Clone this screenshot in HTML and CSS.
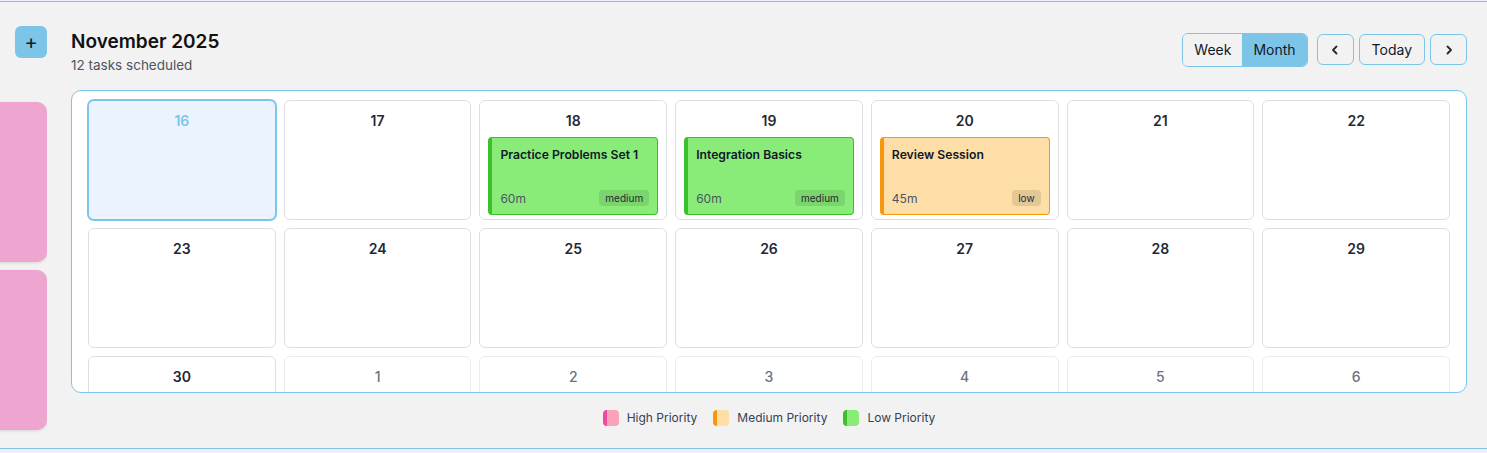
FILE: index.html
```html
<!DOCTYPE html>
<html lang="en">
<head>
<meta charset="utf-8">
<title>Calendar</title>
<link rel="stylesheet" href="styles.css">
</head>
<body>
<div class="app">
  <aside class="sidebar">
    <button class="add-btn" type="button">+</button>
    <div class="side-card"></div>
    <div class="side-card"></div>
  </aside>
  <main class="main">
    <header class="header">
      <div class="title-block">
        <h1 class="title">November 2025</h1>
        <p class="subtitle">12 tasks scheduled</p>
      </div>
      <div class="controls">
        <div class="toggle">
          <button class="toggle-btn" type="button">Week</button>
          <button class="toggle-btn active" type="button">Month</button>
        </div>
        <div class="nav">
          <button class="nav-btn icon" type="button" aria-label="Previous">
            <svg width="14" height="14" viewBox="0 0 14 14"><polyline points="8.5,3.5 5,7 8.5,10.5" fill="none" stroke="#1f2937" stroke-width="1.8" stroke-linecap="round" stroke-linejoin="round"/></svg>
          </button>
          <button class="nav-btn" type="button">Today</button>
          <button class="nav-btn icon" type="button" aria-label="Next">
            <svg width="14" height="14" viewBox="0 0 14 14"><polyline points="5.5,3.5 9,7 5.5,10.5" fill="none" stroke="#1f2937" stroke-width="1.8" stroke-linecap="round" stroke-linejoin="round"/></svg>
          </button>
        </div>
      </div>
    </header>

    <section class="calendar">
      <div class="grid">
        <div class="cell today"><div class="day">16</div></div>
        <div class="cell"><div class="day">17</div></div>
        <div class="cell"><div class="day">18</div>
          <div class="task medium-prio">
            <div class="task-title">Practice Problems Set 1</div>
            <div class="task-foot"><span class="dur">60m</span><span class="badge">medium</span></div>
          </div>
        </div>
        <div class="cell"><div class="day">19</div>
          <div class="task medium-prio">
            <div class="task-title">Integration Basics</div>
            <div class="task-foot"><span class="dur">60m</span><span class="badge">medium</span></div>
          </div>
        </div>
        <div class="cell"><div class="day">20</div>
          <div class="task low-prio">
            <div class="task-title">Review Session</div>
            <div class="task-foot"><span class="dur">45m</span><span class="badge">low</span></div>
          </div>
        </div>
        <div class="cell"><div class="day">21</div></div>
        <div class="cell"><div class="day">22</div></div>

        <div class="cell"><div class="day">23</div></div>
        <div class="cell"><div class="day">24</div></div>
        <div class="cell"><div class="day">25</div></div>
        <div class="cell"><div class="day">26</div></div>
        <div class="cell"><div class="day">27</div></div>
        <div class="cell"><div class="day">28</div></div>
        <div class="cell"><div class="day">29</div></div>

        <div class="cell"><div class="day">30</div></div>
        <div class="cell other"><div class="day">1</div></div>
        <div class="cell other"><div class="day">2</div></div>
        <div class="cell other"><div class="day">3</div></div>
        <div class="cell other"><div class="day">4</div></div>
        <div class="cell other"><div class="day">5</div></div>
        <div class="cell other"><div class="day">6</div></div>
      </div>
    </section>

    <div class="legend">
      <div class="legend-item"><span class="swatch sw-high"></span>High Priority</div>
      <div class="legend-item"><span class="swatch sw-medium"></span>Medium Priority</div>
      <div class="legend-item"><span class="swatch sw-low"></span>Low Priority</div>
    </div>
  </main>
</div>
</body>
</html>
```

FILE: styles.css
```css
* { box-sizing: border-box; }

html, body {
  margin: 0;
  padding: 0;
}

body {
  background: #eef0fb;
  padding-top: 1px;
  font-family: Inter, "Noto Sans", "Liberation Sans", sans-serif;
  color: #111827;
  height: 453px;
  overflow: hidden;
}

.app {
  display: flex;
  height: 448px;
  background: #f2f2f2;
  border-top: 1px solid #7fc0e3;
  border-bottom: 1px solid #7fc0e3;
}

.sidebar {
  width: 47px;
  flex: none;
  padding-top: 24px;
  overflow: hidden;
  display: flex;
  flex-direction: column;
  align-items: flex-start;
}

.add-btn {
  width: 32px;
  height: 32px;
  margin-left: 15px;
  border: none;
  border-radius: 6px;
  background: #7cc5e9;
  color: #111827;
  font-family: inherit;
  font-size: 20px;
  font-weight: 400;
  line-height: 32px;
  padding: 0;
  margin-bottom: 44px;
}

.side-card {
  width: 60px;
  height: 160px;
  margin-left: -13px;
  flex: none;
  border-radius: 10px;
  background: #eea5cf;
  box-shadow: 0 1px 3px rgba(0, 0, 0, 0.12);
  margin-bottom: 8px;
}

.main {
  width: 1396px;
  margin-left: 24px;
  padding-top: 25px;
}

.header {
  height: 48px;
  display: flex;
  align-items: center;
  justify-content: space-between;
  margin-bottom: 15px;
}

.title {
  margin: 0;
  padding-top: 1px;
  font-size: 19px;
  line-height: 28px;
  font-weight: 600;
  color: #111111;
}

.subtitle {
  margin: 0;
  font-size: 13.5px;
  line-height: 19px;
  color: #4b5563;
}

.controls {
  display: flex;
  align-items: center;
  padding-bottom: 3px;
}

.toggle {
  display: flex;
  height: 34px;
  border: 1px solid #7cc5e9;
  border-radius: 6px;
  overflow: hidden;
  margin-right: 9px;
}

.toggle-btn {
  border: none;
  background: #f2f2f2;
  font-family: inherit;
  font-size: 14px;
  color: #111827;
  padding: 0 11px;
  height: 100%;
}

.toggle-btn.active {
  background: #7cc5e9;
  padding: 0 11px;
}

.nav {
  display: flex;
  gap: 5px;
}

.nav-btn {
  height: 31px;
  border: 1px solid #7cc5e9;
  border-radius: 6px;
  background: #f2f2f2;
  font-family: inherit;
  font-size: 14px;
  color: #111827;
  padding: 0 12px;
  display: flex;
  align-items: center;
  justify-content: center;
}

.nav-btn.icon {
  width: 37px;
  padding: 0;
}

.calendar {
  height: 303px;
  border: 1px solid #7cc5e9;
  border-radius: 10px;
  background: #ffffff;
  overflow: hidden;
  padding: 9px 16px 8px;
}

.grid {
  display: grid;
  grid-template-columns: repeat(7, 1fr);
  grid-auto-rows: 120px;
  gap: 8px;
}

.cell {
  border: 1px solid #dedfe2;
  border-radius: 6px;
  background: #ffffff;
  padding: 10px 8px 8px;
}

.cell.today {
  background: #eaf3fe;
  border-color: #7cc5e9;
  box-shadow: 0 0 0 1px #7cc5e9;
}

.cell.other {
  border-color: #ececef;
}

.day {
  text-align: center;
  font-size: 14px;
  line-height: 20px;
  font-weight: 600;
  color: #1f2937;
}

.today .day {
  color: #7cc5e9;
}

.other .day {
  color: #6b7280;
  font-weight: 500;
}

.task {
  margin-top: 6px;
  height: 78px;
  border-radius: 4px;
  border: 1px solid;
  border-left-width: 4px;
  padding: 9px 8px 8px 8px;
  display: flex;
  flex-direction: column;
  justify-content: space-between;
}

.medium-prio {
  background: #89ec79;
  border-color: #3bc02b;
}

.low-prio {
  background: #fddea7;
  border-color: #f7970d;
}

.task-title {
  font-size: 12.2px;
  line-height: 16px;
  font-weight: 600;
  color: #111827;
}

.task-foot {
  display: flex;
  align-items: center;
  justify-content: space-between;
}

.dur {
  font-size: 12px;
  color: #4b5563;
}

.badge {
  font-size: 10px;
  line-height: 16px;
  padding: 0 6px;
  border-radius: 4px;
  background: rgba(0, 0, 0, 0.1);
  color: #1f2937;
}

.legend {
  margin-top: 17px;
  display: flex;
  justify-content: center;
  gap: 16px;
}

.legend-item {
  display: flex;
  align-items: center;
  gap: 8px;
  font-size: 12px;
  line-height: 16px;
  color: #374151;
}

.swatch {
  width: 16px;
  height: 16px;
  border-radius: 4px;
  border-left: 4px solid;
}

.sw-high { background: #f9a3bb; border-color: #f04a9a; }
.sw-medium { background: #fddea7; border-color: #f7970d; }
.sw-low { background: #89ec79; border-color: #3bc02b; }
```
